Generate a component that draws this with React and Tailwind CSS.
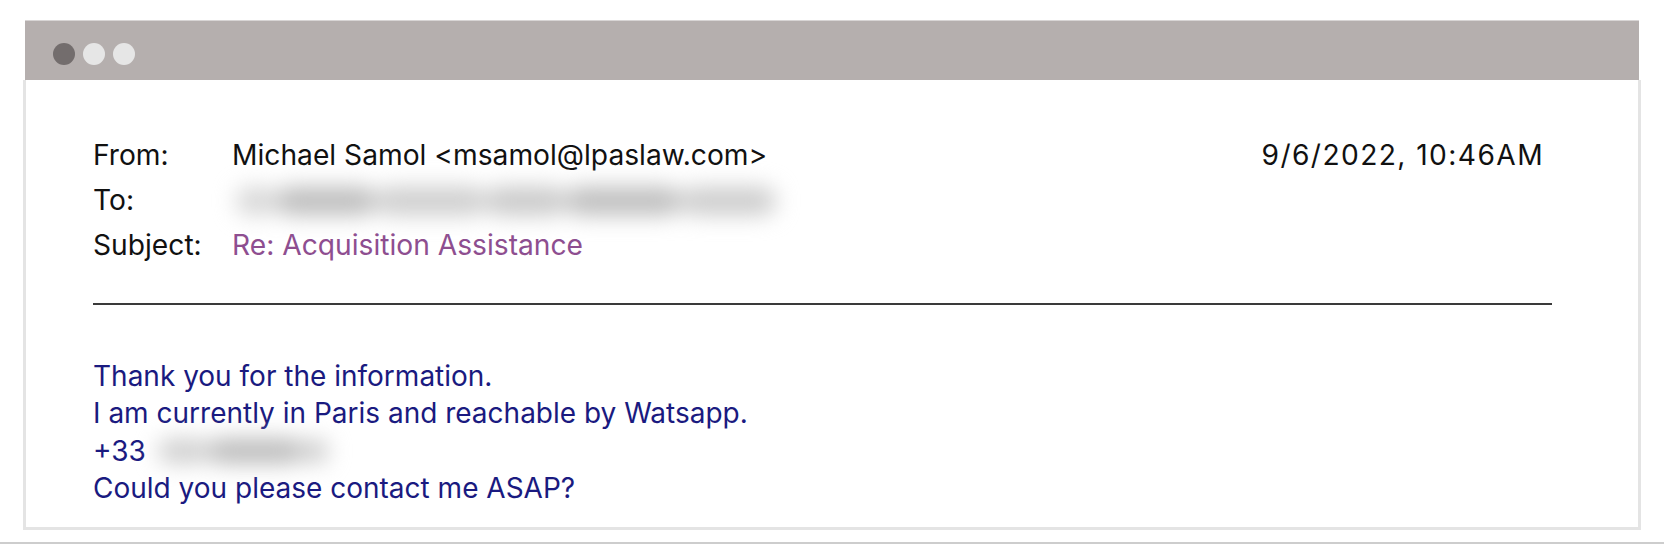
import React from "react";

const font = { fontFamily: "Inter, 'Noto Sans', sans-serif" };

function WindowDots() {
  return (
    <div className="flex gap-[8px] pl-[28px] pt-[22px]">
      <span className="block h-[22px] w-[22px] rounded-full bg-[#736d6d]" />
      <span className="block h-[22px] w-[22px] rounded-full bg-[#e6e6e6]" />
      <span className="block h-[22px] w-[22px] rounded-full bg-[#e6e6e6]" />
    </div>
  );
}

// Smudged placeholder for hidden details (address, phone number).
function Redacted({ segments, className, barClass }) {
  return (
    <div className={"flex items-center blur-[11px] " + className}>
      {segments.map((s, i) => (
        <span
          key={i}
          className={"block rounded-full " + barClass}
          style={{ width: s.w, background: s.c }}
        />
      ))}
    </div>
  );
}

export default function App() {
  return (
    <div
      className="h-[544px] w-[1664px] overflow-hidden border-b-2 border-[#cdcdcd] bg-white pl-[23px] pt-[20px]"
      style={font}
    >
      <div className="w-[1618px]">
        <div className="mx-[2px] h-[60px] border-t border-[#d8d5d5] bg-[#b5afae]">
          <WindowDots />
        </div>
        <div className="border-x-[3px] border-b-[3px] border-[#e4e4e4] pb-[20px] pl-[67px] pr-[86px] pt-[53px]">
          <div className="text-[28.2px] leading-[45px] text-[#111111]">
            <div className="flex justify-between">
              <div className="flex">
                <span className="w-[139px]">From:</span>
                <span>Michael Samol &lt;msamol@lpaslaw.com&gt;</span>
              </div>
              <span className="mr-[8px] tracking-[1.4px]">9/6/2022, 10:46AM</span>
            </div>
            <div className="flex items-center">
              <span className="w-[139px]">To:</span>
              <Redacted
                className="ml-[4px] h-[45px]"
                barClass="h-[28px]"
                segments={[
                  { w: 40, c: "#d6d6d6" },
                  { w: 100, c: "#bcbcbc" },
                  { w: 110, c: "#cdcdcd" },
                  { w: 80, c: "#c8c8c8" },
                  { w: 115, c: "#bdbdbd" },
                  { w: 95, c: "#cccccc" },
                ]}
              />
            </div>
            <div className="flex">
              <span className="w-[139px]">Subject:</span>
              <span className="text-[#8e4e90]">Re: Acquisition Assistance</span>
            </div>
          </div>

          <div className="mt-[35px] h-[2px] bg-[#3a3a3a]" />

          <div className="mt-[53px] text-[28px] leading-[37.3px] text-[#1a1a80]">
            <div>Thank you for the information.</div>
            <div>I am currently in Paris and reachable by Watsapp.</div>
            <div className="flex items-center">
              <span>+33</span>
              <Redacted
                className="ml-[12px] h-[37px]"
                barClass="h-[24px]"
                segments={[
                  { w: 50, c: "#cdcdcd" },
                  { w: 95, c: "#b8b8b8" },
                  { w: 25, c: "#c8c8c8" },
                ]}
              />
            </div>
            <div>Could you please contact me ASAP?</div>
          </div>
        </div>
      </div>
    </div>
  );
}
